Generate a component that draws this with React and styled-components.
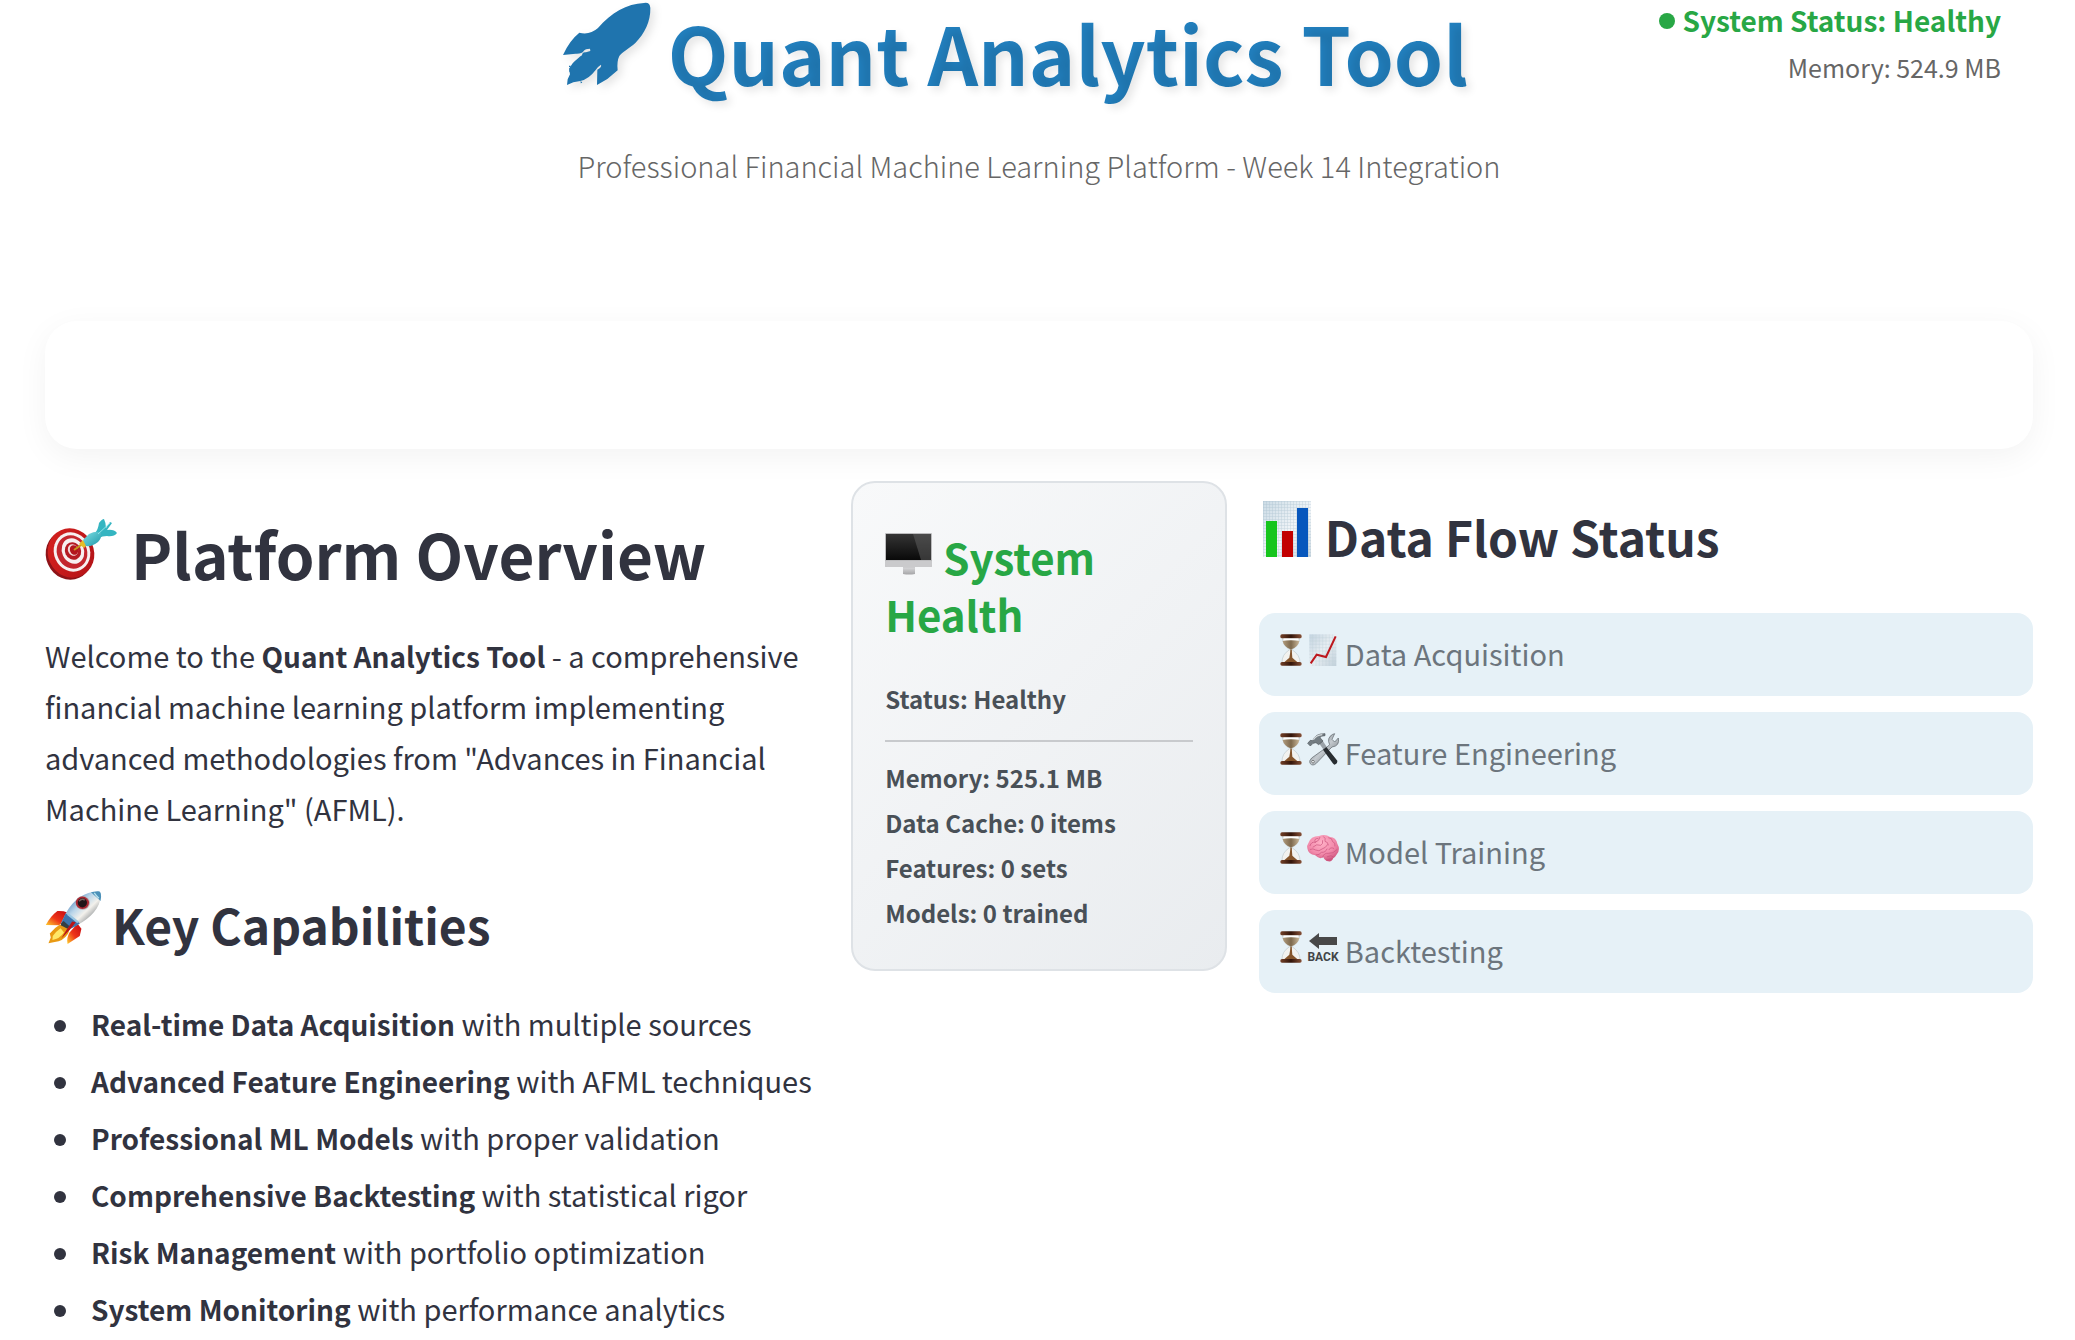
import styled, { createGlobalStyle, css } from "styled-components";

const GlobalStyle = createGlobalStyle`
  * {
    box-sizing: border-box;
    margin: 0;
    padding: 0;
  }
  body {
    background-color: #fff;
    color: #31333f;
    font-family: "Noto Sans CJK SC", "Noto Sans", sans-serif;
    font-size: 29px;
    line-height: 51px;
  }
  strong {
    font-size: 28px;
    line-height: 1;
  }
`;

const Page = styled.div`
  padding: 0 42px 0 45px;
`;

const Header = styled.header`
  display: grid;
  grid-template-columns: 1fr 2fr 1fr;
  margin-bottom: 130px;
`;

const Brand = styled.div`
  grid-column: 2;
  text-align: center;
`;

const Title = styled.h1`
  padding-right: 48px;
  font-size: 79px;
  font-weight: 700;
  line-height: 104px;
  white-space: nowrap;
`;

const TitleText = styled.span`
  background-color: #2280bf;
  background-clip: text;
  -webkit-text-fill-color: transparent;
  text-shadow: 4px 4px 8px rgba(0, 0, 0, 0.1);
`;

const Subtitle = styled.p`
  margin-top: 35px;
  color: #666;
  font-weight: 300;
  line-height: 52px;
  white-space: nowrap;
`;

const StatusBox = styled.div`
  padding-right: 32px;
  text-align: right;
  white-space: nowrap;
`;

const StatusLine = styled.p`
  color: #28a745;
  font-size: 28px;
  font-weight: 700;
  line-height: 40px;

  &::before {
    content: "";
    display: inline-block;
    width: 16px;
    height: 16px;
    margin-right: 7px;
    border-radius: 50%;
    background-color: currentColor;
    vertical-align: 3px;
  }
`;

const MemoryLine = styled.p`
  margin-top: 5px;
  color: #666;
  font-size: 25px;
  line-height: 45px;
`;

const Banner = styled.section`
  height: 128px;
  margin-bottom: 32px;
  border-radius: 32px;
  background-color: #fff;
  box-shadow: 0 8px 32px rgba(0, 0, 0, 0.05);
`;

const Columns = styled.main`
  display: grid;
  grid-template-columns: calc(40% - 21px) calc(20% - 22px) calc(40% - 21px);
  gap: 32px;
  align-items: start;
`;

const Overview = styled.section`
  padding-top: 29px;
`;

const Heading = styled.h2`
  font-weight: 700;
  ${(props) =>
    props.$size === "large" &&
    css`
      font-size: 62px;
      line-height: 86px;
    `}
  ${(props) =>
    props.$size === "medium" &&
    css`
      font-size: 48px;
      line-height: 68px;
    `}
  ${(props) =>
    props.$size === "small" &&
    css`
      font-size: 42px;
      line-height: 57px;
      color: #28a745;
    `}
`;

const Intro = styled.p`
  margin: 34px 0 56px;
`;

const CapabilityList = styled.ul`
  display: flex;
  flex-direction: column;
  gap: 6px;
  margin-top: 40px;
  list-style: none;
`;

const Capability = styled.li`
  &::before {
    content: "";
    display: inline-block;
    width: 12px;
    height: 12px;
    margin: 0 25px 0 9px;
    border-radius: 50%;
    background-color: currentColor;
    vertical-align: 4px;
  }
`;

const HealthCard = styled.section`
  padding: 45px 32px 34px;
  border: 2px solid #dee2e6;
  border-radius: 24px;
  background: linear-gradient(135deg, #f8f9fa, #e9ecef);
`;

const HealthStatus = styled.p`
  margin-top: 34px;
  color: #495057;
  font-size: 24px;
  font-weight: 700;
  line-height: 45px;
`;

const Divider = styled.hr`
  height: 2px;
  margin: 19px 0 13px;
  border: none;
  background-color: #c8cacd;
`;

const HealthStats = styled.ul`
  color: #495057;
  font-size: 24px;
  font-weight: 700;
  line-height: 45px;
  list-style: none;
`;

const DataFlow = styled.section`
  padding-top: 20px;
`;

const FlowList = styled.ul`
  display: flex;
  flex-direction: column;
  gap: 16px;
  margin-top: 43px;
  list-style: none;
`;

const FlowStep = styled.li`
  padding: 15px 16px 17px;
  border-radius: 16px;
  background-color: #e6f1f7;
  color: #6c757d;
`;

const Icon = styled.svg`
  width: ${(props) => props.$width}px;
  height: ${(props) => props.$height}px;
  margin: 0 ${(props) => props.$right || 0}px 0 ${(props) => props.$left || 0}px;
  overflow: visible;
  vertical-align: baseline;
`;

const ShadowIcon = styled(Icon)`
  filter: drop-shadow(4px 4px 4px rgba(0, 0, 0, 0.1));
`;

function RocketShape() {
  return (
    <ShadowIcon $width={90} $height={84} $right={16} viewBox="70 4 270 252" aria-hidden="true">
      <path
        fill="#1f74ae"
        d="M316 7Q334 4 335 22C336 62 318 99 290 127C272 143 249 156 242 166Q234 182 237 209L206 235L175 253L176 207Q190 199 187 192Q178 197 171 208Q151 235 125 241L104 245L85 253L87 236L94 221L91 204L102 188Q119 171 130 164Q131 153 142 155L155 151L154 144Q140 144 135 151Q130 160 111 159L73 163Q92 120 122 96Q153 104 178 82C218 36 264 9 316 7Z"
      />
      <path fill="#1f74ae" d="M91 195h5v4h-5zM92 209h5v4h-5zM126 240l5 6-5 2z" />
    </ShadowIcon>
  );
}

function TargetIcon() {
  return (
    <Icon $width={72} $height={62} $right={14} viewBox="0 0 72 62" aria-hidden="true">
      <defs>
        <linearGradient id="targetRim" x1="0" y1="0" x2="1" y2="1">
          <stop offset="0" stopColor="#d8221f" />
          <stop offset="1" stopColor="#b01217" />
        </linearGradient>
        <linearGradient id="dart" x1="0" y1="0" x2="1" y2="1">
          <stop offset="0" stopColor="#7fe0e6" />
          <stop offset="1" stopColor="#1f98a8" />
        </linearGradient>
      </defs>
      <ellipse cx="24" cy="37" rx="23" ry="25" transform="rotate(-24 24 37)" fill="#8e1318" />
      <ellipse cx="26" cy="35" rx="23" ry="25" transform="rotate(-24 26 35)" fill="url(#targetRim)" />
      <ellipse cx="27" cy="34" rx="18" ry="20" transform="rotate(-24 27 34)" fill="#f7f0f0" />
      <ellipse cx="27" cy="34" rx="15" ry="17" transform="rotate(-24 27 34)" fill="#c3262d" />
      <ellipse cx="28" cy="33" rx="11" ry="13" transform="rotate(-24 28 33)" fill="#f7f0f0" />
      <ellipse cx="28" cy="33" rx="8" ry="9" transform="rotate(-24 28 33)" fill="#b51b23" />
      <ellipse cx="28" cy="32" rx="5" ry="6" transform="rotate(-24 28 32)" fill="#f3dcdc" />
      <ellipse cx="29" cy="32" rx="4" ry="5" transform="rotate(-24 29 32)" fill="#b3161d" />
      <path d="M29 32l10-7" stroke="#c79a1b" strokeWidth="2" />
      <path d="M34 26l4-4 4 5-3 3z" fill="#e6bd27" />
      <path d="M50 15Q53 12 54 5Q57 1 59 1Q61 5 61 10L65 4L67 5L62 12Q69 11 72 15Q69 19 62 18Q57 18 54 20Z" fill="#35b5c1" />
      <path d="M38 22L44 16Q52 12 56 15Q57 20 53 24Q47 29 41 28Z" fill="url(#dart)" />
      <path d="M53 16l12-11" stroke="#8fe4e8" strokeWidth="1" />
    </Icon>
  );
}

function RocketIcon() {
  return (
    <Icon $width={57} $height={54} $right={10} viewBox="45 58 170 164" aria-hidden="true">
      <defs>
        <linearGradient id="rocketBody" x1="0" y1="0" x2="1" y2="1">
          <stop offset="0.2" stopColor="#4d82b8" />
          <stop offset="0.42" stopColor="#b9d5e9" />
          <stop offset="0.58" stopColor="#f3f1ec" />
          <stop offset="0.8" stopColor="#7d8388" />
        </linearGradient>
        <linearGradient id="rocketFin" x1="1" y1="0" x2="0" y2="1">
          <stop offset="0" stopColor="#c50912" />
          <stop offset="0.55" stopColor="#ee3518" />
          <stop offset="1" stopColor="#ffd12c" />
        </linearGradient>
      </defs>
      <path d="M111 123Q99 118 81 119Q60 135 46 161L86 162L105 146Z" fill="url(#rocketFin)" />
      <path d="M142 157L154 173L149 195L112 219Q108 200 118 184Z" fill="url(#rocketFin)" />
      <path d="M89 160Q72 170 58 187L61 199L54 217L73 213Q98 211 114 187L119 170Z" fill="#e99a13" />
      <path d="M91 171Q76 181 67 195L66 207Q88 203 101 184Z" fill="#ffe868" />
      <path d="M204 59Q214 58 213 72C211 110 182 141 144 160L118 173L92 157L107 125C132 82 164 61 204 59Z" fill="url(#rocketBody)" />
      <path d="M183 62Q192 70 212 88Q218 58 204 59Z" fill="#4b91b9" />
      <path d="M193 64Q199 73 207 80" stroke="#b9e3ee" strokeWidth="4" fill="none" />
      <path d="M106 126L134 144L149 157Q130 171 118 173L92 157Z" fill="#3e74ac" />
      <path d="M113 128L144 153" stroke="#9bc7e2" strokeWidth="7" />
      <path d="M93 156l7-7 17 15-5 9-21-11z" fill="#363e42" />
      <path d="M126 151L137 153L119 176L93 202Q108 176 126 151Z" fill="#ba1518" />
      <ellipse cx="158" cy="94" rx="22" ry="21" fill="#b7adb0" />
      <ellipse cx="157" cy="94" rx="20" ry="19" fill="#a82732" />
      <ellipse cx="157" cy="94" rx="14" ry="14" fill="#201619" />
      <path d="M147 89q9-10 17-3" stroke="#77615f" strokeWidth="4" fill="none" />
    </Icon>
  );
}

function MonitorIcon() {
  return (
    <Icon $width={48} $height={42} $right={10} viewBox="0 0 48 42" aria-hidden="true">
      <defs>
        <linearGradient id="monitorScreen" x1="0" y1="0" x2="0" y2="1">
          <stop offset="0" stopColor="#343434" />
          <stop offset="1" stopColor="#090909" />
        </linearGradient>
        <linearGradient id="monitorStand" x1="0" y1="0" x2="0" y2="1">
          <stop offset="0" stopColor="#8e8e90" />
          <stop offset="0.3" stopColor="#d5d5d7" />
          <stop offset="1" stopColor="#a5a5a7" />
        </linearGradient>
      </defs>
      <path d="M18 32h12v9q-6 1-12 0z" fill="url(#monitorStand)" />
      <rect width="47" height="34" rx="1" fill="#bcbcbe" />
      <rect x="1" y="1" width="45" height="26" fill="url(#monitorScreen)" />
      <path d="M28 1h18v26H36z" fill="#5c5c5c" opacity="0.55" />
      <path d="M0 28h47v4q0 2-2 2H2q-2 0-2-2z" fill="#cacacc" />
    </Icon>
  );
}

function BarChartIcon() {
  return (
    <Icon $width={48} $height={56} $left={4} $right={14} viewBox="0 0 48 56" aria-hidden="true">
      <defs>
        <linearGradient id="chartPaper" x1="0" y1="0" x2="1" y2="1">
          <stop offset="0" stopColor="#cbdbe5" />
          <stop offset="0.55" stopColor="#f1f5f8" />
          <stop offset="1" stopColor="#cbd8e0" />
        </linearGradient>
        <pattern id="chartGrid" width="3" height="3" patternUnits="userSpaceOnUse">
          <path d="M0 0h3M0 0v3" stroke="#8ca9ba" strokeWidth="1" opacity="0.4" />
        </pattern>
      </defs>
      <rect width="48" height="56" fill="url(#chartPaper)" />
      <rect width="48" height="56" fill="url(#chartGrid)" />
      <rect x="3" y="20" width="11" height="36" fill="#16c51d" />
      <rect x="19" y="30" width="11" height="26" fill="#c20000" />
      <rect x="34" y="7" width="11" height="49" fill="#0757bd" />
    </Icon>
  );
}

function HourglassIcon() {
  return (
    <Icon $width={22} $height={32} $left={5} $right={5} viewBox="0 0 66 96" aria-hidden="true">
      <defs>
        <linearGradient id="hourglassWood">
          <stop offset="0" stopColor="#744128" />
          <stop offset="0.5" stopColor="#321409" />
          <stop offset="1" stopColor="#875137" />
        </linearGradient>
        <linearGradient id="hourglassSand">
          <stop offset="0" stopColor="#b19c7e" />
          <stop offset="0.5" stopColor="#7d694d" />
          <stop offset="1" stopColor="#c9b799" />
        </linearGradient>
      </defs>
      <path d="M7 11h52Q58 34 36 47Q61 63 60 87H6Q5 61 29 47Q8 34 7 11Z" fill="#f2f2ef" stroke="#bec9cc" strokeWidth="2" />
      <path d="M8 21Q33 16 58 21Q55 38 35 46L33 74L31 46Q11 37 8 21Z" fill="url(#hourglassSand)" />
      <path d="M32 48h3l2 23 18 16H10l18-16z" fill="#85552c" />
      <rect x="1" y="1" width="64" height="12" rx="5" fill="url(#hourglassWood)" />
      <rect x="1" y="84" width="64" height="11" rx="5" fill="url(#hourglassWood)" />
      <path d="M12 16h42" stroke="#fff" strokeWidth="4" />
    </Icon>
  );
}

function TrendIcon() {
  return (
    <Icon $width={32} $height={32} $right={6} viewBox="0 0 96 96" aria-hidden="true">
      <defs>
        <linearGradient id="trendPaper" x1="0" y1="0" x2="1" y2="1">
          <stop offset="0" stopColor="#c3d4e0" />
          <stop offset="0.5" stopColor="#e9eff3" />
          <stop offset="1" stopColor="#c1d0da" />
        </linearGradient>
      </defs>
      <rect x="7" y="1" width="81" height="95" fill="url(#trendPaper)" />
      <path d="M17 1v95M27 1v95M37 1v95M47 1v95M57 1v95M67 1v95M77 1v95M7 11h81M7 21h81M7 31h81M7 41h81M7 51h81M7 61h81M7 71h81M7 81h81" stroke="#bccdd8" strokeWidth="1" />
      <path d="M11 88L29 62L57 69L86 7" fill="none" stroke="#bd171d" strokeWidth="6" />
    </Icon>
  );
}

function ToolsIcon() {
  return (
    <Icon $width={32} $height={32} $right={6} viewBox="0 0 96 96" aria-hidden="true">
      <defs>
        <linearGradient id="toolSteel" x1="0" y1="0" x2="1" y2="1">
          <stop offset="0" stopColor="#53585d" />
          <stop offset="0.5" stopColor="#c4cacf" />
          <stop offset="1" stopColor="#555b60" />
        </linearGradient>
      </defs>
      <path d="M60 42L68 35Q58 15 77 4L83 2L75 19L83 27L94 15Q99 39 75 42L69 48L28 91Q17 101 9 91Q5 84 14 75Z" fill="url(#toolSteel)" stroke="#596067" strokeWidth="2" />
      <circle cx="18" cy="86" r="4" fill="#eff3f5" stroke="#555" strokeWidth="2" />
      <path d="M36 31L47 23L61 44L51 52Z" fill="#9aa2a8" />
      <path d="M48 50L58 42L91 83Q92 93 82 95Q77 91 73 85Z" fill="#282d31" />
      <path d="M2 31L10 22L17 23Q25 1 54 2L54 8Q41 8 39 14L48 24L35 35L27 29L18 31L10 39Z" fill="#747d83" stroke="#4e565b" strokeWidth="2" />
      <path d="M19 20Q29 6 46 5" stroke="#d6dcdf" strokeWidth="4" fill="none" />
    </Icon>
  );
}

function BrainIcon() {
  return (
    <Icon $width={32} $height={32} $right={6} viewBox="0 0 96 96" aria-hidden="true">
      <defs>
        <radialGradient id="brainTissue" cx="45%" cy="30%" r="70%">
          <stop offset="0" stopColor="#ffb0c6" />
          <stop offset="0.6" stopColor="#f28aab" />
          <stop offset="1" stopColor="#cf557e" />
        </radialGradient>
      </defs>
      <path d="M4 34Q11 12 36 12Q54 4 69 15Q87 16 91 35Q101 52 90 66Q84 77 79 78Q75 90 64 88Q54 87 49 76Q36 83 25 70Q3 67 1 49Q-1 41 4 34Z" fill="url(#brainTissue)" />
      <path
        d="M9 41Q13 28 25 31Q19 20 33 19M25 31Q38 26 39 16M18 45Q29 34 41 40Q49 36 47 26M50 14Q57 18 54 28Q64 30 64 39M65 17Q76 17 77 29Q86 31 84 42M10 52Q18 48 26 54Q36 60 45 51Q56 48 62 38M27 69Q38 69 43 61Q56 62 60 51M47 75Q51 62 64 64Q78 66 90 53M66 53Q70 44 80 49M61 74Q73 67 80 75M58 84L74 80"
        fill="none"
        stroke="#c9517b"
        strokeWidth="2"
        strokeLinecap="round"
      />
    </Icon>
  );
}

function BackIcon() {
  return (
    <Icon $width={32} $height={32} $right={6} viewBox="0 0 32 32" aria-hidden="true">
      <path d="M2 10L12 2V6H30V14H12V18Z" fill="#484848" />
      <text
        x="16"
        y="30"
        fill="#414547"
        fontFamily="Roboto, Liberation Sans, sans-serif"
        fontSize="12"
        fontWeight="700"
        textAnchor="middle"
      >
        BACK
      </text>
    </Icon>
  );
}

const capabilities = [
  { name: "Real-time Data Acquisition", detail: "with multiple sources" },
  { name: "Advanced Feature Engineering", detail: "with AFML techniques" },
  { name: "Professional ML Models", detail: "with proper validation" },
  { name: "Comprehensive Backtesting", detail: "with statistical rigor" },
  { name: "Risk Management", detail: "with portfolio optimization" },
  { name: "System Monitoring", detail: "with performance analytics" },
];

const healthStats = [
  "Memory: 525.1 MB",
  "Data Cache: 0 items",
  "Features: 0 sets",
  "Models: 0 trained",
];

const flowSteps = [
  { name: "Data Acquisition", StepIcon: TrendIcon },
  { name: "Feature Engineering", StepIcon: ToolsIcon },
  { name: "Model Training", StepIcon: BrainIcon },
  { name: "Backtesting", StepIcon: BackIcon },
];

export default function App() {
  return (
    <>
      <GlobalStyle />
      <Page>
        <Header>
          <Brand>
            <Title>
              <RocketShape />
              <TitleText>Quant Analytics Tool</TitleText>
            </Title>
            <Subtitle>
              Professional Financial Machine Learning Platform - Week 14 Integration
            </Subtitle>
          </Brand>
          <StatusBox>
            <StatusLine>System Status: Healthy</StatusLine>
            <MemoryLine>Memory: 524.9 MB</MemoryLine>
          </StatusBox>
        </Header>

        <Banner />

        <Columns>
          <Overview>
            <Heading $size="large">
              <TargetIcon />
              Platform Overview
            </Heading>
            <Intro>
              Welcome to the <strong>Quant Analytics Tool</strong> - a
              comprehensive financial machine learning platform implementing
              advanced methodologies from "Advances in Financial Machine
              Learning" (AFML).
            </Intro>
            <Heading $size="medium">
              <RocketIcon />
              Key Capabilities
            </Heading>
            <CapabilityList>
              {capabilities.map((item) => (
                <Capability key={item.name}>
                  <strong>{item.name}</strong> {item.detail}
                </Capability>
              ))}
            </CapabilityList>
          </Overview>

          <HealthCard>
            <Heading $size="small">
              <MonitorIcon />
              System Health
            </Heading>
            <HealthStatus>Status: Healthy</HealthStatus>
            <Divider />
            <HealthStats>
              {healthStats.map((stat) => (
                <li key={stat}>{stat}</li>
              ))}
            </HealthStats>
          </HealthCard>

          <DataFlow>
            <Heading $size="medium">
              <BarChartIcon />
              Data Flow Status
            </Heading>
            <FlowList>
              {flowSteps.map(({ name, StepIcon }) => (
                <FlowStep key={name}>
                  <HourglassIcon />
                  <StepIcon />
                  {name}
                </FlowStep>
              ))}
            </FlowList>
          </DataFlow>
        </Columns>
      </Page>
    </>
  );
}
